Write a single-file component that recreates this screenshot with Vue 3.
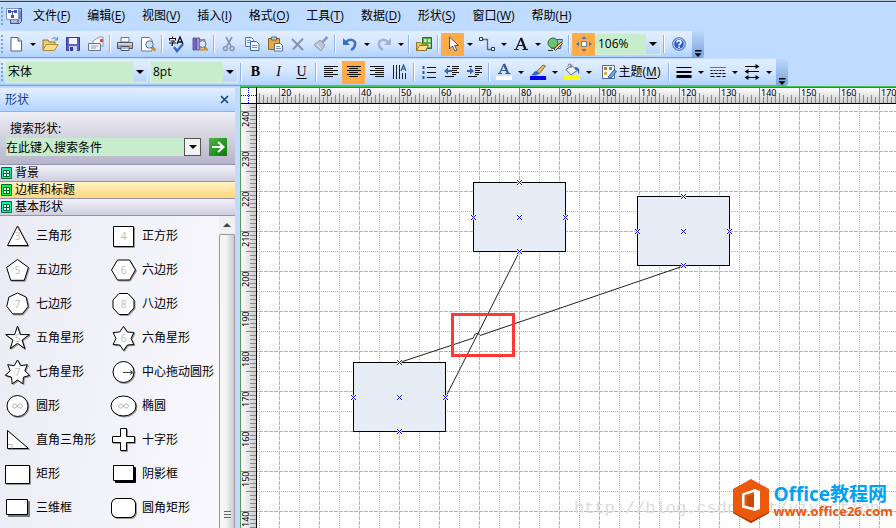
<script setup>
import { ref } from 'vue'

const menus = [
  ['文件', 'F'], ['编辑', 'E'], ['视图', 'V'], ['插入', 'I'], ['格式', 'O'],
  ['工具', 'T'], ['数据', 'D'], ['形状', 'S'], ['窗口', 'W'], ['帮助', 'H'],
]

const icons = {
  file: '<path d="M4 2.5h7l3.500 3.500v10H4z" fill="#fff" stroke="#52607f"/><path d="M11 2.500V6h3.500" fill="#cfdcf2" stroke="#52607f"/>',
  open: '<path d="M2 15V5h5l1 2h6v3" fill="#f3cf6b" stroke="#94702a"/><path d="M2 15.500l3-6h12l-3.500 6z" fill="#ffdf84" stroke="#b08a3c"/><path d="M11 4c2-2 4-1.500 5 .5M16.500 2v3h-3" fill="none" stroke="#5d7aa8"/>',
  save: '<path d="M2.500 2.500h13v13h-13z" fill="#5b63c4" stroke="#353b93"/><path d="M5 3h8v6H5z" fill="#f3f5ff"/><path d="M5 11h8v5H5z" fill="#c8cee8"/><path d="M6 12h3v4H6z" fill="#353b93"/>',
  mail: '<path d="M6 6l6-4h4v9H6z" fill="#fff" stroke="#8893a8"/><path d="M1.500 8.500h12v7h-12z" fill="#eef3fb" stroke="#68748c"/><path d="M4 11h7M4 13h5" stroke="#8da0c0"/><path d="M13 4h3v3h-3z" fill="#d9502b"/>',
  print: '<path d="M5 2.500h8V7H5z" fill="#fff" stroke="#68748c"/><path d="M1.500 7.500h15v6h-15z" fill="#9aa5b6" stroke="#4b566a"/><path d="M2 8h14v2H2z" fill="#ced5df"/><path d="M5 11.500h8v4H5z" fill="#fff" stroke="#4b566a"/><path d="M6 13h6" stroke="#5682c4"/><path d="M14 11h1.500" stroke="#e9a526" stroke-width="2"/>',
  preview: '<path d="M2.500 2.500h8l2.500 3v10.500H2.500z" fill="#fff" stroke="#6a7792"/><path d="M13 12l3.500 3.500" stroke="#c98b35" stroke-width="2.500"/><circle cx="10.500" cy="9.500" r="3.700" fill="#c7e2fb" stroke="#5c6c86"/>',
  spell: '<path d="M1 3.500h7M4.500 1.500v2M1.500 3.500v2M7.500 3.500v2M2.500 6h4l-2 1.500v3l-1.500-.5M1 8h7" fill="none" stroke="#111"/><path d="M9 9l3-7 3 7M10 7h4" fill="none" stroke="#111" stroke-width="1.300"/><path d="M6 12l3 4 6-7" fill="none" stroke="#3668c5" stroke-width="2.400"/>',
  research: '<path d="M2 3h3v12H2z" fill="#7865bd" stroke="#6558a5"/><path d="M5.500 3h3v12h-3z" fill="#a390d8" stroke="#6558a5"/><path d="M9 4.500h5v10.500H9z" fill="#e2c46a" stroke="#a58c4c"/><path d="M13.500 12l3 3.500" stroke="#c98b35" stroke-width="2.400"/><circle cx="11.500" cy="9" r="3.500" fill="#d3e8fb" stroke="#5c6c86"/>',
  cut: '<path d="M6 2l5 9M12 2L7 11" stroke="#8794b0" stroke-width="1.600"/><circle cx="5.500" cy="13.500" r="2" fill="none" stroke="#8794b0" stroke-width="1.600"/><circle cx="12" cy="13.500" r="2" fill="none" stroke="#8794b0" stroke-width="1.600"/>',
  copy: '<path d="M2.500 2.500h6l2 2v7h-8z" fill="#eef4ff" stroke="#5078b8"/><path d="M4 5.500h4M4 7.500h4" stroke="#6e94cf"/><path d="M7.500 6.500h6l2.500 2.500v6.500H7.500z" fill="#eef4ff" stroke="#3f68ad"/><path d="M9 10.500h5M9 12.500h5" stroke="#6e94cf"/>',
  paste: '<path d="M2.500 3.500h11v11h-11z" fill="#e8a83c" stroke="#8d632a"/><path d="M5.500 2h5v3h-5z" fill="#c6cbd6" stroke="#5d6273"/><path d="M8.500 8.500h6l2 2v5.500h-8z" fill="#fff" stroke="#5b6c8f"/><path d="M10 11.500h4M10 13.500h5" stroke="#7c95c0"/>',
  del: '<path d="M3 4l11 11M14 3.500L4 14.500" stroke="#8693b3" stroke-width="2"/>',
  painter: '<path d="M15.500 2l-5 5" stroke="#8e9ab3" stroke-width="2.500"/><path d="M8 5l5 5-4 6-7-6z" fill="#bcc5d6" stroke="#8e9ab3"/><path d="M5 9l4 5" stroke="#edf1f8"/>',
  undo: '<path d="M5 7c4-4 10-2 9 3-.4 2-2 4-4 5" fill="none" stroke="#3f6fc0" stroke-width="2.500"/><path d="M2 3v7h7z" fill="#3f6fc0"/>',
  redo: '<path d="M13 7c-4-4-10-2-9 3 .4 2 2 4 4 5" fill="none" stroke="#a3b2cd" stroke-width="2.500"/><path d="M16 3v7H9z" fill="#a3b2cd"/>',
  shapes: '<path d="M7.500 2.500h9v11h-9z" fill="#57ad45" stroke="#2c6d25"/><path d="M9 4h2.500v3H9zM13 4h2.500v3H13zM13 9h2.500v3H13z" fill="#cdeec4"/><path d="M1.500 15.500v-8h4l1 1.500h5v6.500z" fill="#f0c963" stroke="#8f7127"/><path d="M1.500 15.500l3-5h9l-3 5z" fill="#ffe596" stroke="#8f7127"/>',
  pointer: '<path d="M5.500 2v12l3-3 2.500 5 2-1-2.500-4.500h4z" fill="#fff" stroke="#44577c"/>',
  connector: '<path d="M3.500 4.500h6v10h4" fill="none" stroke="#536a90" stroke-width="1.300"/><path d="M1.500 2.500h3v3h-3zM13.500 12.500h3v3h-3z" fill="#fff" stroke="#22375d"/>',
  text: '<path d="M4 14.500L9 3" fill="none" stroke="#111" stroke-width="1.200"/><path d="M9 3l4.500 11.500" fill="none" stroke="#111" stroke-width="2.200"/><path d="M6 10.500h6M2 14.500h4.500M10.500 14.500H16" fill="none" stroke="#111" stroke-width="1.200"/>',
  draw: '<path d="M7.500 4.500h9l-2 9h-9z" fill="#a9c8f0" stroke="#385e9c"/><circle cx="7" cy="8" r="5" fill="#6fc06f" stroke="#2f7a3b"/><path d="M8 14l7-7 1.500 1.500-7 7z" fill="#f1c65b" stroke="#6b4b24"/><path d="M2 15.500h5" stroke="#333"/>',
  pan: '<path d="M6.500 6.500h5v5h-5z" fill="#fff" stroke="#6c7d99"/><path d="M9 1l2.500 3h-5zM9 17l2.500-3h-5zM1 9l3-2.500v5zM17 9l-3-2.500v5z" fill="#4c78ad"/>',
  help: '<circle cx="9" cy="9" r="6.500" fill="#2c5fca" stroke="#6f8fc8"/><circle cx="9" cy="9" r="5.300" fill="none" stroke="#dce9ff"/><path d="M7 7.500c0-2.500 4-2.500 4 0 0 1.500-2 1.500-2 3M9 11.500v1.500" fill="none" stroke="#fff" stroke-width="1.600"/>',
  left: '<path d="M2 3.500h14M2 5.500h9M2 7.500h14M2 9.500h9M2 11.500h14M2 13.500h9" stroke="#111"/>',
  center: '<path d="M2 3.500h14M4 5.500h9M2 7.500h14M4 9.500h9M2 11.500h14M4 13.500h9" stroke="#111"/>',
  right: '<path d="M2 3.500h14M7 5.500h9M2 7.500h14M7 9.500h9M2 11.500h14M7 13.500h9" stroke="#111"/>',
  vertical: '<path d="M2.500 2v14M5.500 2v14M8.500 2v14M11.500 10v6M14.500 10v6" stroke="#222"/><path d="M10 8l2.500-6L15 8M11 6h3" fill="none" stroke="#28518f" stroke-width="1.200"/>',
  bullets: '<path d="M7 4.500h9M7 9.500h9M7 14.500h9" stroke="#111"/><path d="M2.500 3h2v3h-2zM2.500 8h2v3h-2zM2.500 13h2v3h-2z" fill="#31599c"/>',
  outdent: '<path d="M9 3.500h7M9 5.500h7M9 7.500h5M9 9.500h7M9 11.500h4M2 13.500h9M4 3.500h3" stroke="#111"/><path d="M1 8l4-3.500V7h4v2H5v2.500z" fill="#3c67b0"/>',
  indent: '<path d="M9 3.500h7M9 5.500h7M9 7.500h5M9 9.500h7M9 11.500h4M2 13.500h9M3 3.500h3" stroke="#111"/><path d="M8 8L4 4.500V7H1v2h3v2.500z" fill="#3c67b0"/>',
  fontColor: '<path d="M4.500 10.500L9 1" fill="none" stroke="#31568f" stroke-width="1.200"/><path d="M9 1l4 9.500" fill="none" stroke="#31568f" stroke-width="2.200"/><path d="M6 7.500h6M3 10.500h4M10.500 10.500h5" fill="none" stroke="#31568f" stroke-width="1.200"/><path d="M1 13h16v4H1z" fill="#fff"/>',
  lineColor: '<path d="M7 9l7-7 2.500 1L10 11z" fill="#e9bf62" stroke="#8a6a2c"/><path d="M2 12c3-1 2-4 6-4l2 2c-1 3-5 3-8 2z" fill="#3568b8"/><path d="M1 13h16v4H1z" fill="#00f"/>',
  fill: '<path d="M3 6.500l6-4 5 5-6 4.500z" fill="#eef3fa" stroke="#5b6980"/><path d="M8 5V1.500c-2-1-3 0-3 2" fill="none" stroke="#5b6980"/><path d="M12 4c4 0 5 3 4 7-1.500-2-1-4-4-5z" fill="#3568b8"/><path d="M1 13h16v4H1z" fill="#ff0"/>',
  theme: '<path d="M2.500 2.500h12v13h-12z" fill="#fff" stroke="#516b9a"/><path d="M4 4h3v3H4z" fill="#d66e27"/><path d="M9 4h3v3H9z" fill="#56a04a"/><path d="M4 9h3v3H4z" fill="#d9b43d"/><path d="M8 14l6-7 2.500 1.500L11 15z" fill="#71a6e5" stroke="#355f9d"/>',
  weight: '<path d="M1.500 4.500h15" stroke="#000"/><path d="M1.500 9h15" stroke="#000" stroke-width="2"/><path d="M1.500 13.500h15" stroke="#000" stroke-width="3"/>',
  pattern: '<path d="M1.500 4.500h15" stroke="#000" stroke-dasharray="1 1"/><path d="M1.500 7.500h15" stroke="#000" stroke-dasharray="2 1"/><path d="M1.500 10.500h15" stroke="#000" stroke-dasharray="3 1"/><path d="M1.500 13.500h15" stroke="#000" stroke-dasharray="4 2"/>',
  arrows: '<path d="M2 3.500h11M5 8.500h11M5 14.500h8" stroke="#000"/><path d="M16.500 3.500L12.500 1v5zM1.500 8.500L5.500 6v5zM1.500 14.500l4-2.500v5zM16.500 14.500l-4-2.500v5z" fill="#000"/>',
}

const standard = [
  ['file', '新建'], '>', ['open', '打开'], ['save', '保存'], ['mail', '电子邮件'], '|',
  ['print', '打印'], ['preview', '打印预览'], '|', ['spell', '拼写检查'], ['research', '信息检索'], '|',
  ['cut', '剪切'], ['copy', '复制'], ['paste', '粘贴'], ['del', '删除'], ['painter', '格式刷'], '|',
  ['undo', '撤消'], '>', ['redo', '恢复'], '>', '|', ['shapes', '形状'], '|',
  ['pointer', '指针工具', true], '>', ['connector', '连接线工具'], '>', ['text', '文本工具'], '>', ['draw', '绘图工具'], '|',
  ['pan', '平移和缩放', true],
]
const paragraph = [
  ['left', '左对齐'], ['center', '居中', true], ['right', '右对齐'], ['vertical', '垂直文本'], '|',
  ['bullets', '项目符号'], ['outdent', '减少缩进'], ['indent', '增加缩进'], '|',
  ['fontColor', '文字颜色'], '>', ['lineColor', '线条颜色'], '>', ['fill', '填充颜色'], '>',
]
const lineTools = [['weight', '线条粗细'], '>', ['pattern', '线型'], '>', ['arrows', '线端'], '>']

const query = ref('在此键入搜索条件')
const stencils = ['背景', '边框和标题', '基本形状']

const poly = (n, r, cy = 17) =>
  Array.from({ length: n }, (_, i) => {
    const a = (i * 2 * Math.PI) / n - Math.PI / 2
    return `${(17.5 + r * Math.cos(a)).toFixed(1)},${(cy + r * Math.sin(a)).toFixed(1)}`
  }).join(' ')
const star = (n, r, inner) =>
  Array.from({ length: n * 2 }, (_, i) => {
    const a = (i * Math.PI) / n - Math.PI / 2
    const q = i % 2 ? inner : r
    return `${(17.5 + q * Math.cos(a)).toFixed(1)},${(17.5 + q * Math.sin(a)).toFixed(1)}`
  }).join(' ')

const shapes = [
  { name: '三角形', pts: '17.5,7 28,26.500 7.500,26.500', n: '3' },
  { name: '正方形', pts: '7.500,7.500 27.500,7.500 27.500,27.500 7.500,27.500', n: '4' },
  { name: '五边形', pts: poly(5, 11.5, 18), n: '5' },
  { name: '六边形', pts: '5.500,17 11.500,7 23.500,7 29.500,17 23.500,27 11.500,27', n: '6' },
  { name: '七边形', pts: poly(7, 11), n: '7' },
  { name: '八边形', pts: '13,6.500 22,6.500 28,13 28,21 22,27.500 13,27.500 7,21 7,13', n: '8' },
  { name: '五角星形', pts: star(5, 12.5, 4.8), n: '5' },
  { name: '六角星形', pts: star(6, 12, 7.5), n: '6' },
  { name: '七角星形', pts: star(7, 12.5, 7.5), n: '7' },
  { name: '中心拖动圆形', rx: 10.5, ry: 10.5, arrow: true },
  { name: '圆形', rx: 10.5, ry: 10.5, loop: true },
  { name: '椭圆', rx: 12.5, ry: 10, loop: true },
  { name: '直角三角形', pts: '7.500,7.500 28.500,25.500 7.500,25.500', corner: true },
  { name: '十字形', pts: '14.500,5.500 20.500,5.500 20.500,13.500 28.500,13.500 28.500,19.500 20.500,19.500 20.500,27.500 14.500,27.500 14.500,19.500 6.500,19.500 6.500,13.500 14.500,13.500' },
  { name: '矩形', pts: '5.500,8.500 29.500,8.500 29.500,26.500 5.500,26.500' },
  { name: '阴影框', pts: '7.500,8.500 27.500,8.500 27.500,23.500 7.500,23.500', depth: 2, shade: '#000' },
  { name: '三维框', pts: '6.500,8.500 27.500,8.500 27.500,23.500 6.500,23.500', depth: 2, shade: '#777' },
  { name: '圆角矩形', pts: '10,7.500 25,7.500 28,9 29.500,12 29.500,22 28,25 25,26.500 10,26.500 7,25 5.500,22 5.500,12 7,9' },
]

const across = Array.from({ length: 16 }, (_, i) => 20 + i * 10)
const down = Array.from({ length: 11 }, (_, i) => 240 - i * 10)

const boxes = [
  { x: 216.5, y: 78.5 },
  { x: 380.5, y: 92.5 },
  { x: 96.5, y: 258.5 },
].map((b) => ({
  ...b,
  points: [[46, 0], [0, 35], [46, 35], [92, 35], [46, 69]].map(([dx, dy]) => [b.x + dx, b.y + dy]),
}))
</script>

<template>
  <div class="app">
    <header class="chrome">
      <nav class="menubar" aria-label="菜单">
        <i class="grip"></i>
        <svg class="doc" width="18" height="18" viewBox="0 0 18 18">
          <path d="M5.500 1.500h11v13l-2 2h-9z" fill="#a9bbe0" stroke="#3f5288" />
          <path d="M1.500 1.500h12v11h-12z" fill="#fff" stroke="#7d8fd0" />
          <path d="M3 3h3v3H3zM9 3h3v3H9zM6 8h3v3H6z" fill="#3c55b5" />
          <path d="M6 4.500h3M7.500 4.500V8M13 13v3M15 4v8" stroke="#3c55b5" />
        </svg>
        <a v-for="m in menus" :key="m[1]" href="#">{{ m[0] }}(<u>{{ m[1] }}</u>)</a>
      </nav>

      <div class="toolbar" role="toolbar" aria-label="常用">
        <i class="grip"></i>
        <template v-for="(t, i) in standard" :key="i">
          <i v-if="t === '|'" class="sep"></i>
          <button v-else-if="t === '>'" class="more" aria-label="更多"><i class="caret"></i></button>
          <button v-else class="tool" :class="{ on: t[2] }" :aria-label="t[1]">
            <svg width="18" height="18" viewBox="0 0 18 18" v-html="icons[t[0]]"></svg>
          </button>
        </template>
        <span class="combo zoom">
          <select aria-label="显示比例"><option>106%</option></select>
          <span class="drop"><i class="caret"></i></span>
        </span>
        <i class="sep"></i>
        <button class="tool" aria-label="帮助">
          <svg width="18" height="18" viewBox="0 0 18 18" v-html="icons.help"></svg>
        </button>
        <button class="cap" aria-label="工具栏选项"><i></i></button>
      </div>

      <div class="toolbar" role="toolbar" aria-label="格式">
        <i class="grip"></i>
        <span class="combo font">
          <select aria-label="字体"><option>宋体</option></select>
          <span class="drop"><i class="caret"></i></span>
        </span>
        <span class="combo size">
          <select aria-label="字号"><option>8pt</option></select>
          <span class="drop"><i class="caret"></i></span>
        </span>
        <i class="sep"></i>
        <button class="tool letter" aria-label="加粗"><b>B</b></button>
        <button class="tool letter" aria-label="倾斜"><em>I</em></button>
        <button class="tool letter" aria-label="下划线"><u>U</u></button>
        <i class="sep"></i>
        <template v-for="(t, i) in paragraph" :key="i">
          <i v-if="t === '|'" class="sep"></i>
          <button v-else-if="t === '>'" class="more" aria-label="更多"><i class="caret"></i></button>
          <button v-else class="tool" :class="{ on: t[2] }" :aria-label="t[1]">
            <svg width="18" height="18" viewBox="0 0 18 18" v-html="icons[t[0]]"></svg>
          </button>
        </template>
        <button class="theme">
          <svg width="18" height="18" viewBox="0 0 18 18" v-html="icons.theme"></svg>
          <span>主题(<u>M</u>)</span>
        </button>
        <i class="sep"></i>
        <template v-for="(t, i) in lineTools" :key="i">
          <button v-if="t === '>'" class="more" aria-label="更多"><i class="caret"></i></button>
          <button v-else class="tool" :aria-label="t[1]">
            <svg width="18" height="18" viewBox="0 0 18 18" v-html="icons[t[0]]"></svg>
          </button>
        </template>
        <button class="cap" aria-label="工具栏选项"><i></i></button>
      </div>
    </header>

    <div class="work">
      <aside class="panel">
        <div class="title">
          <h2>形状</h2>
          <button aria-label="关闭">
            <svg width="9" height="9" viewBox="0 0 9 9"><path d="M1 1l7 7M8 1L1 8" stroke="#15428b" stroke-width="1.600" /></svg>
          </button>
        </div>
        <form class="search" @submit.prevent>
          <label for="query">搜索形状:</label>
          <div class="field">
            <input id="query" v-model="query" type="text" />
            <button type="button" class="history" aria-label="历史"><i class="caret"></i></button>
            <button class="go" aria-label="搜索">
              <svg width="18" height="18" viewBox="0 0 18 18"><path d="M3 9h11M9 4l5.500 5L9 14" fill="none" stroke="#fff" stroke-width="2" /></svg>
            </button>
          </div>
        </form>
        <button v-for="(s, i) in stencils" :key="s" class="stencil" :class="{ hot: i === 1 }">
          <svg width="11" height="12" viewBox="0 0 11 12">
            <path d="M.5.500h10v11H.5z" :fill="i === 1 ? '#00ff30' : '#10f0b0'" stroke="#063" />
            <path d="M2.500 3.500h6v6h-6zM5.500 3v7M2 6.500h7" fill="#fff" stroke="#063" />
          </svg>
          {{ s }}
        </button>
        <div class="library">
          <ul>
            <li v-for="s in shapes" :key="s.name">
              <svg width="36" height="34" viewBox="0 0 36 34">
                <g v-if="s.pts">
                  <polygon :points="s.pts" :fill="s.shade || '#999'" :stroke="s.shade || '#999'" :transform="`translate(${s.depth || 1} ${s.depth || 1})`" />
                  <polygon :points="s.pts" fill="#fff" stroke="#000" />
                </g>
                <g v-else>
                  <ellipse cx="18.500" cy="18" :rx="s.rx" :ry="s.ry" fill="#999" stroke="#999" />
                  <ellipse cx="17.500" cy="17" :rx="s.rx" :ry="s.ry" fill="#fff" stroke="#000" />
                </g>
                <path v-if="s.arrow" d="M17 17.500h9M24 15.500l3 2-3 2" fill="none" stroke="#444" />
                <path v-if="s.corner" d="M8 21.500h4v4" fill="none" stroke="#bbb" />
                <path v-if="s.loop" d="M17.500 17c-1-1.500-2-2-3-2-2.500 0-2.500 4 0 4 1 0 2-.5 3-2s2-2 3-2c2.500 0 2.500 4 0 4-1 0-2-.5-3-2z" fill="none" stroke="#aaa" />
                <text v-if="s.n" class="count" x="17.500" y="21" text-anchor="middle">{{ s.n }}</text>
              </svg>
              <span>{{ s.name }}</span>
            </li>
          </ul>
          <div class="scroll" aria-hidden="true">
            <i class="up"></i>
            <div class="thumb"><i></i></div>
          </div>
        </div>
      </aside>

      <main class="sheet">
        <div class="corner"></div>
        <div class="ruler top"><span v-for="n in across" :key="n">{{ n }}</span></div>
        <div class="ruler side"><span v-for="n in down" :key="n">{{ n }}</span></div>
        <div class="canvas">
          <svg class="drawing" width="100%" height="100%">
            <defs>
              <pattern id="grid" width="40" height="40" x="22" y="7" patternUnits="userSpaceOnUse">
                <path d="M.5 0v40M0 .500h40" stroke="#b4b4b4" stroke-dasharray="4 1" />
                <path d="M20.500 0v40M0 20.500h40" stroke="#b4b4b4" stroke-dasharray="1 1" />
              </pattern>
            </defs>
            <rect width="100%" height="100%" fill="url(#grid)" />
            <rect v-for="b in boxes" :key="b.x" :x="b.x" :y="b.y" width="92" height="69" fill="#e7edf7" stroke="#000" />
            <g fill="none" stroke="#222">
              <path d="M262.500 147.500L188.500 293.500" />
              <path d="M426.500 162L223 231.500C221 228 217 229 216.500 234L142.500 258.500" />
            </g>
            <template v-for="b in boxes" :key="b.y">
              <g v-for="(p, i) in b.points" :key="i" :transform="`translate(${p[0]} ${p[1]})`">
                <path d="M-2.500 -2.500L2.500 2.500M2.500 -2.500L-2.500 2.500" stroke="#fff" stroke-width="2.500" />
                <path d="M-2.500 -2.500L2.500 2.500M2.500 -2.500L-2.500 2.500" stroke="#00f" />
              </g>
            </template>
            <rect x="195.500" y="210.500" width="61" height="41" fill="none" stroke="#ff3737" stroke-width="3" />
          </svg>
          <span class="watermark">http://blog.csdn.net/yiyaction</span>
          <div class="brand">
            <svg width="36" height="44" viewBox="0 0 36 44">
              <path d="M18 0l18 10v24L18 44 0 34V10z" fill="#eb5a0c" />
              <path d="M0 33l18 9 18-9v1L18 44 0 34z" fill="#b23a04" />
              <path d="M9 14.500l13-4.500 5 2v18l-5 2-13-3.500z" fill="#fff" />
              <path d="M11.500 16l9.500-3v15.500l-9.500-2z" fill="#eb5a0c" />
              <path d="M14 17.500l7-2v13l-7-1.500z" fill="#c94a08" />
            </svg>
            <div>
              <strong>Office教程网</strong>
              <small>www.office26.com</small>
            </div>
          </div>
        </div>
      </main>
    </div>
  </div>
</template>

<style>
body { background: #bfdbff; }
</style>

<style scoped>
* { box-sizing: border-box; }
.app {
  display: flex;
  flex-direction: column;
  height: 100vh;
  overflow: hidden;
  background: #bfdbff;
  color: #000;
  font: 12px/16px "Open Sans", "Noto Sans CJK SC", sans-serif;
}
button, input, select { font: inherit; color: inherit; }
button {
  display: flex;
  align-items: center;
  justify-content: center;
  padding: 0;
  border: 0;
  background: none;
}
u { text-underline-offset: 2px; }

.chrome { border-top: 1px solid #b4c9d8; box-shadow: inset 0 1px #2c475c; }
.menubar { display: flex; align-items: center; gap: 17px; height: 30px; }
.menubar a { color: #000; text-decoration: none; white-space: nowrap; }
.menubar .doc { margin: 0 -7px 0 -16px; }
.grip {
  width: 4px;
  height: 18px;
  background: repeating-linear-gradient(#7aa3d8 0 2px, transparent 2px 4px);
  background-size: 2px 100%;
  background-repeat: no-repeat;
  background-position: 1px 0;
}

.toolbar {
  display: flex;
  align-items: center;
  width: max-content;
  height: 27px;
  border-bottom: 1px solid #6f9ddb;
  border-radius: 0 3px 3px 0;
  background: linear-gradient(#e3efff, #d3e5ff 50%, #b0d2ff);
}
.toolbar + .toolbar { margin-top: 1px; }
.tool { width: 23px; height: 23px; }
.tool.on { background: #ffab47; }
.letter { font: 14px/16px "Liberation Serif", serif; }
.more { width: 11px; height: 23px; }
.caret {
  border: 3px solid transparent;
  border-top-color: #000;
  border-bottom: 0;
}
.sep { width: 2px; height: 18px; margin: 0 2px; background: linear-gradient(90deg, #8fb4e4 50%, #fff 50%); }
.combo { display: grid; grid-template-columns: 1fr 14px; height: 22px; background: #c7edcc; border: 1px solid #d8f0e4; }
.combo select {
  grid-area: 1 / 1 / 2 / 3;
  appearance: none;
  padding: 0 0 0 2px;
  border: 0;
  background: none;
}
.combo .drop {
  grid-area: 1 / 2;
  display: flex;
  align-items: center;
  justify-content: center;
  background: linear-gradient(#e0edff, #b9d6fc);
  pointer-events: none;
}
.drop .caret { border-width: 4px 4px 0; }
.combo.font { width: 143px; margin: 0 2px 0 1px; }
.combo.size { width: 88px; }
.combo.zoom { width: 66px; }
.theme { gap: 1px; width: 72px; height: 23px; }
.cap {
  align-items: flex-end;
  align-self: stretch;
  width: 12px;
  margin-left: 2px;
  border-radius: 0 3px 3px 0;
  background: linear-gradient(#bdd7fb, #79a5de);
}
.cap i { width: 7px; height: 7px; background: #000; clip-path: polygon(0 0, 100% 0, 100% 20%, 0 20%, 0 45%, 100% 45%, 50% 100%, 0 45%); }

.work { display: flex; flex: 1; gap: 5px; min-height: 0; }
.panel { display: flex; flex-direction: column; width: 235px; padding-top: 2px; }
.title {
  display: flex;
  align-items: center;
  justify-content: space-between;
  height: 24px;
  padding: 0 6px 0 5px;
  border-bottom: 1px solid #9ab0d8;
  background: linear-gradient(#e3efff, #b3d4ff);
}
.title h2 { margin: 0; color: #15428b; font-size: 12px; font-weight: 400; }
.search { height: 52px; padding: 8px 6px 0; background: linear-gradient(#eeeef3, #b6b4c9); }
.search label { display: block; padding-left: 4px; line-height: 18px; }
.field { display: flex; align-items: center; }
.field input { flex: 1; min-width: 0; height: 18px; padding: 0; border: 0; background: #c7edcc; }
.history { width: 17px; height: 18px; border: 1px solid #555; background: #f2f2f2; }
.history .caret { border-width: 4px 4px 0; }
.go { width: 18px; height: 18px; margin: 0 2px 0 8px; background: linear-gradient(135deg, #4fb53f, #087a0d); }
.stencil {
  justify-content: flex-start;
  gap: 3px;
  height: 17px;
  padding-left: 1px;
  border-top: 1px solid #9391b5;
  background: linear-gradient(#f2f2f7, #cfcee0);
  line-height: 16px;
}
.stencil.hot { background: linear-gradient(#fff3c8, #ffd778); }
.library {
  display: flex;
  flex: 1;
  min-height: 0;
  border-top: 1px solid #9391b5;
  background: linear-gradient(100deg, #ebebf5, #f9f9fd);
}
.library ul {
  display: grid;
  grid-template-columns: 106px 1fr;
  grid-auto-rows: 34px;
  flex: 1;
  margin: 0;
  padding: 3px 0 0;
  list-style: none;
  overflow: hidden;
}
.library li { display: flex; align-items: center; white-space: nowrap; }
.count { fill: #bbb; font: 10px "Open Sans", sans-serif; }
.scroll { display: flex; flex-direction: column; width: 16px; background: #f0f0f0; }
.up { align-self: center; margin: 7px 0; border: 4px solid transparent; border-top: 0; border-bottom-color: #444; }
.thumb {
  display: flex;
  flex: 1;
  align-items: flex-end;
  justify-content: center;
  padding-bottom: 9px;
  border: 1px solid #999;
  border-bottom: 0;
  border-radius: 2px 2px 0 0;
  background: linear-gradient(90deg, #f5f5f5 40%, #cacaca);
}
.thumb i { width: 7px; height: 8px; background: repeating-linear-gradient(#666 0 1px, #eee 1px 3px); }

.sheet {
  display: grid;
  flex: 1;
  grid-template: 17px 1fr / 16px 1fr;
  min-width: 0;
  border-top: 1px solid #3cc850;
  border-left: 1px solid #4f9a62;
  background: #fff;
}
.corner {
  border-top: 1px solid #666;
  border-right: 1px solid #000;
  border-bottom: 1px solid #000;
  background:
    repeating-linear-gradient(90deg, #00f 0 1px, transparent 1px 2px) 0 7px / 100% 1px no-repeat,
    repeating-linear-gradient(#00f 0 1px, transparent 1px 2px) 7px 0 / 1px 100% no-repeat,
    #fff;
}
.ruler {
  display: flex;
  overflow: hidden;
  font: 9px/10px "Noto Sans", sans-serif;
}
.ruler span { flex: none; }
.ruler.top {
  padding-left: 24px;
  border-top: 1px solid #666;
  border-bottom: 1px solid #000;
  background:
    repeating-linear-gradient(90deg, #888 0 1px, transparent 1px 40px) 22px 0 / 100% 100%,
    repeating-linear-gradient(90deg, #888 0 1px, transparent 1px 20px) 2px 5px / 100% 10px,
    repeating-linear-gradient(90deg, #888 0 1px, transparent 1px 8px) 6px 7px / 100% 8px,
    repeating-linear-gradient(90deg, #888 0 1px, transparent 1px 4px) 2px 9px / 100% 6px,
    linear-gradient(#fff, #ccc);
  background-repeat: no-repeat;
}
.ruler.top span { width: 40px; }
.ruler.top span:last-child { width: auto; }
.ruler.side {
  flex-direction: column;
  padding-top: 8px;
  border-right: 1px solid #000;
  background:
    repeating-linear-gradient(#888 0 1px, transparent 1px 40px) 0 7px / 100% 100%,
    repeating-linear-gradient(#888 0 1px, transparent 1px 20px) 5px 7px / 10px 100%,
    repeating-linear-gradient(#888 0 1px, transparent 1px 4px) 9px 3px / 6px 100%,
    linear-gradient(90deg, #fff, #ccc);
  background-repeat: no-repeat;
}
.ruler.side span {
  width: 11px;
  height: 40px;
  text-align: right;
  writing-mode: vertical-rl;
  transform: rotate(180deg);
}
.canvas { position: relative; overflow: hidden; }
.drawing { display: block; }
.watermark {
  position: absolute;
  right: 16px;
  bottom: 9px;
  color: #dcdcd6;
  font: 17px/20px "Liberation Mono", monospace;
}
.brand {
  position: absolute;
  right: 3px;
  bottom: 5px;
  display: flex;
  align-items: center;
  gap: 4px;
}
.brand div { display: flex; flex-direction: column; }
.brand strong { color: #00a2f2; font-size: 19px; line-height: 20px; }
.brand small { color: #eb5a0c; font-size: 13px; font-weight: 700; line-height: 14px; }
</style>
